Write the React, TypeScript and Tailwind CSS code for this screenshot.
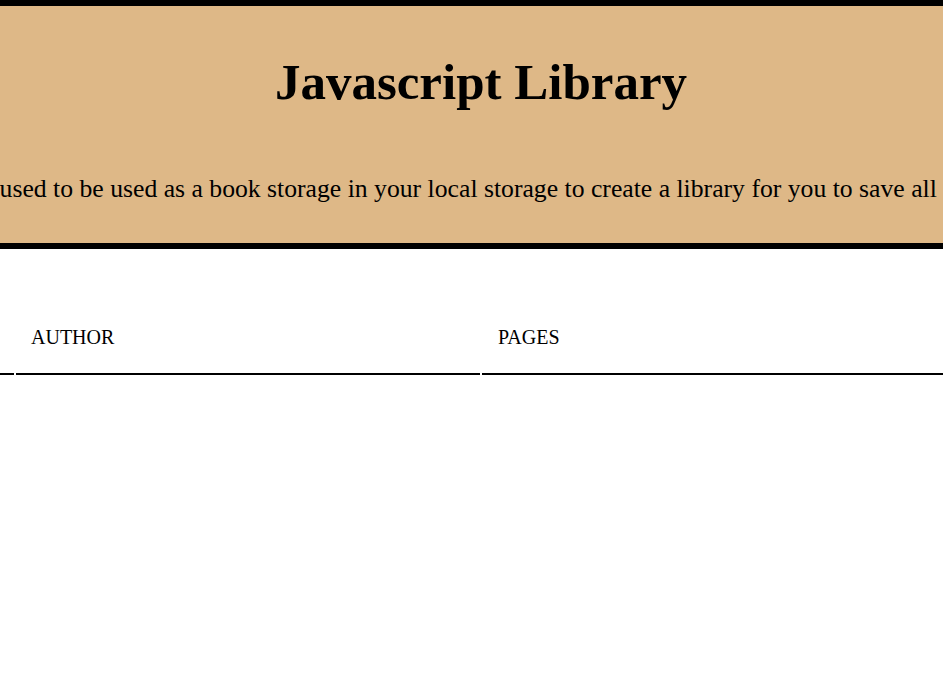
const serif = { fontFamily: '"Liberation Serif", "DejaVu Serif", serif' };

export default function App() {
  return (
    <div className="min-h-[693px] w-full overflow-hidden bg-white text-black" style={serif}>
      <header className="border-y-[6px] border-black bg-[#deb887]">
        <div className="flex h-[237px] flex-col items-center">
          <h1 className="mt-[46px] pl-[19px] text-[51px] font-bold leading-[60px]">Javascript Library</h1>
          <div className="mt-[61px] flex w-full justify-center pr-[18px]">
            <p className="shrink-0 whitespace-nowrap text-[25.7px] leading-[32px]">
              This website is used to be used as a book storage in your local storage to create a library for you to save all of your books
            </p>
          </div>
        </div>
      </header>

      <div className="mt-[73px] flex gap-[2px] text-[20px] uppercase">
        <div className="w-[14px] shrink-0 border-b-2 border-black" />
        <div className="w-[464px] shrink-0 border-b-2 border-black px-[15px] pb-[21px]">Author</div>
        <div className="flex-1 border-b-2 border-black px-[16px] pb-[21px]">Pages</div>
      </div>
    </div>
  );
}
